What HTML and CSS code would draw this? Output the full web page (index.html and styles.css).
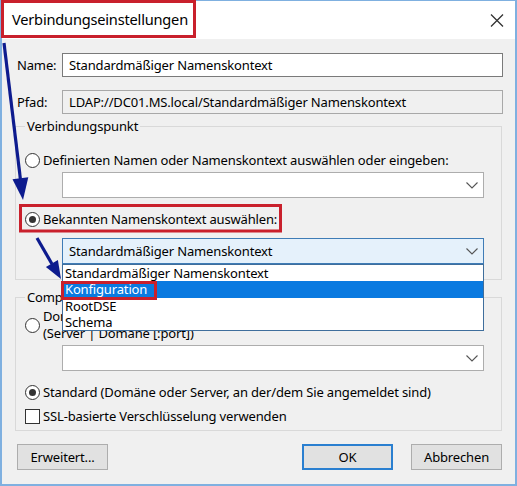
FILE: index.html
```html
<!DOCTYPE html>
<html lang="de">
<head>
<meta charset="utf-8">
<title>Verbindungseinstellungen</title>
<link rel="stylesheet" href="styles.css">
</head>
<body>
<div class="screen">
  <div class="window">
    <div class="titlebar">
      <span class="title">Verbindungseinstellungen</span>
      <svg class="close" width="14" height="13" viewBox="0 0 14 13"><path d="M1 0.5 L13 12.5 M13 0.5 L1 12.5" stroke="#333" stroke-width="1.3" fill="none"/></svg>
    </div>
    <div class="body">
      <div class="field-row">
        <span class="field-label">Name:</span>
        <div class="input">Standardmäßiger Namenskontext</div>
      </div>
      <div class="field-row second">
        <span class="field-label">Pfad:</span>
        <div class="input readonly">LDAP://DC01.MS.local/Standardmäßiger Namenskontext</div>
      </div>

      <fieldset class="group group-one">
        <legend>Verbindungspunkt</legend>
        <div class="option first">
          <span class="radio"></span>
          <span class="option-text">Definierten Namen oder Namenskontext auswählen oder eingeben:</span>
        </div>
        <div class="combo gap-small">
          <span class="combo-text"></span>
          <svg class="chev" width="12" height="7" viewBox="0 0 12 7"><path d="M0.5 0.5 L6 6 L11.5 0.5" stroke="#555" stroke-width="1.1" fill="none"/></svg>
        </div>
        <div class="option second-option">
          <span class="radio checked"></span>
          <span class="option-text">Bekannten Namenskontext auswählen:</span>
        </div>
        <div class="combo-wrap">
          <div class="combo focused">
            <span class="combo-text">Standardmäßiger Namenskontext</span>
            <svg class="chev" width="12" height="7" viewBox="0 0 12 7"><path d="M0.5 0.5 L6 6 L11.5 0.5" stroke="#555" stroke-width="1.1" fill="none"/></svg>
          </div>
          <ul class="droplist">
            <li>Standardmäßiger Namenskontext</li>
            <li class="selected">Konfiguration</li>
            <li>RootDSE</li>
            <li>Schema</li>
          </ul>
        </div>
      </fieldset>

      <fieldset class="group group-two">
        <legend>Computer</legend>
        <div class="option multi">
          <span class="radio"></span>
          <span class="option-text">Domäne oder Server:<br>(Server | Domäne [:port])</span>
        </div>
        <div class="combo gap-small">
          <span class="combo-text"></span>
          <svg class="chev" width="12" height="7" viewBox="0 0 12 7"><path d="M0.5 0.5 L6 6 L11.5 0.5" stroke="#555" stroke-width="1.1" fill="none"/></svg>
        </div>
        <div class="option standard">
          <span class="radio checked"></span>
          <span class="option-text">Standard (Domäne oder Server, an der/dem Sie angemeldet sind)</span>
        </div>
        <div class="option ssl">
          <span class="checkbox"></span>
          <span class="option-text">SSL-basierte Verschlüsselung verwenden</span>
        </div>
      </fieldset>

      <div class="buttons">
        <button class="btn">Erweitert...</button>
        <span class="spacer"></span>
        <button class="btn default">OK</button>
        <button class="btn">Abbrechen</button>
      </div>
    </div>
  </div>

  <svg class="overlay" width="517" height="486" viewBox="0 0 517 486">
    <rect x="2.5" y="1.5" width="192" height="35" fill="none" stroke="#c9202c" stroke-width="3"/>
    <rect x="20.5" y="205.5" width="260" height="25.5" fill="none" stroke="#c9202c" stroke-width="3"/>
    <rect x="62.5" y="282.5" width="93" height="16" fill="none" stroke="#c9202c" stroke-width="3"/>
    <line x1="4" y1="43" x2="20.4" y2="179" stroke="#0d1b8e" stroke-width="3.2"/>
    <polygon points="23,200 28.3,177.2 12.5,179.2" fill="#0d1b8e"/>
    <line x1="37" y1="238" x2="52" y2="264" stroke="#0d1b8e" stroke-width="3.2"/>
    <polygon points="61,279 57.9,260 45.9,267" fill="#0d1b8e"/>
  </svg>
</div>
</body>
</html>
```

FILE: styles.css
```css
* { box-sizing: border-box; }

html, body {
  margin: 0;
  padding: 0;
  background: #f0f0f0;
}

body {
  font-family: "Noto Sans", "Open Sans", sans-serif;
  font-size: 13px;
  letter-spacing: -0.15px;
  color: #000;
}

.screen {
  position: relative;
  width: 517px;
  height: 486px;
  overflow: hidden;
}

.window {
  width: 517px;
  height: 486px;
  background: #f0f0f0;
  border-style: solid;
  border-color: #7fb0e0;
  border-width: 1px 2px 2px 2px;
}

.titlebar {
  height: 38px;
  background: #fff;
  display: flex;
  align-items: center;
  padding: 0 11px 2px 10px;
}

.title {
  font-size: 14.6px;
  letter-spacing: -0.2px;
  flex: 1;
}

.close {
  display: block;
  margin-top: 3px;
}

.body {
  padding: 14px 12px 0 13px;
}

.field-row {
  display: flex;
  align-items: center;
  height: 24px;
}

.field-row.second {
  margin-top: 13px;
}

.field-label {
  width: 47px;
  padding-left: 2px;
}

.input {
  flex: 1;
  height: 24px;
  border: 1px solid #7a7a7a;
  background: #fff;
  padding-left: 6px;
  line-height: 22px;
  white-space: nowrap;
}

.input.readonly {
  background: #f0f0f0;
  border-color: #a8a8a8;
}

.group {
  margin: 0;
  border: 1px solid #d9d9d9;
  padding: 0 0 0 9px;
  width: 487px;
}

.group legend {
  padding: 0 2px;
  line-height: 18px;
}

.group-one {
  margin-top: 3px;
  padding-bottom: 15px;
}

.group-two {
  margin-top: 8px;
  padding-bottom: 5px;
}

.option {
  display: flex;
  align-items: center;
  line-height: 18px;
}

.option.first { margin-top: 16px; }
.option.second-option { margin-top: 12px; }
.option.multi { margin-top: 2px; line-height: 17px; }
.option.standard { margin-top: 12px; }
.option.ssl { margin-top: 6px; }

.option-text {
  margin-left: 3px;
  white-space: nowrap;
}

.radio {
  width: 15px;
  height: 15px;
  flex: none;
  border: 1px solid #333;
  border-radius: 50%;
  background: #fff;
  display: flex;
  align-items: center;
  justify-content: center;
}

.radio.checked::after {
  content: "";
  width: 7px;
  height: 7px;
  border-radius: 50%;
  background: #333;
}

.checkbox {
  width: 15px;
  height: 15px;
  flex: none;
  border: 1px solid #333;
  background: #fff;
}

.combo {
  margin-left: 37px;
  width: 422px;
  height: 26px;
  border: 1px solid #adadad;
  background: #fff;
  display: flex;
  align-items: center;
  padding: 0 5px 0 6px;
}

.combo.gap-small { margin-top: 3px; }

.combo-text {
  flex: 1;
  white-space: nowrap;
}

.chev { display: block; flex: none; }

.combo-wrap {
  position: relative;
  margin-top: 10px;
}

.combo.focused {
  background: #e5f1fb;
  border-color: #3f7cb6;
}

.droplist {
  position: absolute;
  top: 26px;
  left: 37px;
  width: 422px;
  height: 67px;
  margin: 0;
  padding: 0;
  list-style: none;
  background: #fff;
  border: 1px solid #3f6e9c;
  z-index: 2;
}

.droplist li {
  height: 16.25px;
  line-height: 16.25px;
  padding-left: 2px;
  white-space: nowrap;
}

.droplist li.selected {
  background: #0a7ae0;
  color: #fff;
}

.buttons {
  display: flex;
  margin-top: 13px;
  padding-left: 2px;
  padding-right: 1px;
}

.spacer { flex: 1; }

.btn {
  font-family: inherit;
  font-size: inherit;
  letter-spacing: inherit;
  color: #000;
  width: 91px;
  height: 26px;
  border: 1px solid #adadad;
  background: #e1e1e1;
  padding: 0;
  margin: 0;
}

.btn.default {
  border: 2px solid #2a7fd0;
  margin-right: 18px;
}

.overlay {
  position: absolute;
  left: 0;
  top: 0;
  pointer-events: none;
  z-index: 5;
}
```
